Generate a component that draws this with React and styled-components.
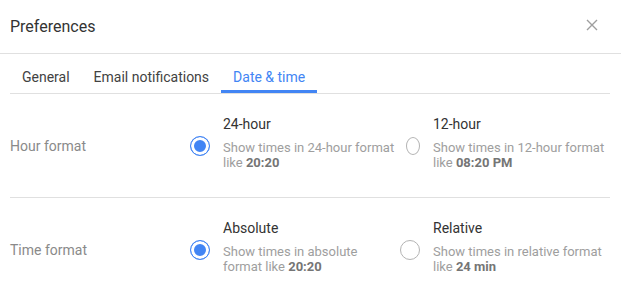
import React, { useState } from "react";
import styled, { createGlobalStyle } from "styled-components";

const GlobalStyle = createGlobalStyle`
  body {
    margin: 0;
    background: #fff;
    font-family: Roboto, "Noto Sans", sans-serif;
  }
`;

const Dialog = styled.div`
  width: 621px;
  background: #fff;
`;

const Header = styled.div`
  height: 53px;
  display: flex;
  align-items: center;
  justify-content: space-between;
  padding: 0 23px 0 10px;
  border-bottom: 1px solid #e0e0e0;
`;

const Title = styled.div`
  font-size: 16px;
  line-height: 20px;
  color: #333;
`;

const CloseButton = styled.button`
  width: 12px;
  height: 12px;
  padding: 0;
  border: none;
  background: none;
  display: flex;
  align-items: center;
  justify-content: center;
  cursor: pointer;
  margin-top: -4px;
`;

const Body = styled.div`
  padding: 0 11px 0 10px;
`;

const Tabs = styled.div`
  display: flex;
  border-bottom: 1px solid #e0e0e0;
`;

const Tab = styled.div`
  padding: 13px 12px 3px;
  font-size: 14px;
  line-height: 20px;
  color: ${(p) => (p.$active ? "#4285f4" : "#424242")};
  border-bottom: 3px solid ${(p) => (p.$active ? "#4285f4" : "transparent")};
  cursor: pointer;
`;

const Row = styled.div`
  display: flex;
  align-items: center;
  height: 103px;
  border-bottom: ${(p) => (p.$last ? "none" : "1px solid #e0e0e0")};
`;

const RowLabel = styled.div`
  width: 180px;
  flex: none;
  font-size: 14px;
  color: #8a8a8a;
`;

const Options = styled.div`
  display: flex;
`;

const Option = styled.label`
  width: 210px;
  display: flex;
  align-items: center;
  cursor: pointer;
`;

const RadioSlot = styled.div`
  width: 20px;
  flex: none;
  display: flex;
  justify-content: flex-end;
  margin-right: 13px;
`;

const Radio = styled.span`
  box-sizing: border-box;
  width: ${(p) => (p.$narrow ? "14px" : "20px")};
  height: ${(p) => (p.$narrow ? "18px" : "20px")};
  border-radius: 50%;
  border: 1px solid ${(p) => (p.$checked ? "#4285f4" : "#b3b3b3")};
  background: ${(p) => (p.$checked ? "#4285f4" : "#fff")};
  box-shadow: ${(p) => (p.$checked ? "inset 0 0 0 3px #fff" : "none")};
`;

const OptionText = styled.div`
  width: 177px;
  padding-bottom: 8px;
`;

const OptionTitle = styled.div`
  font-size: 14px;
  line-height: 20px;
  color: #333;
  margin-bottom: 6px;
`;

const OptionDesc = styled.div`
  font-size: 13px;
  line-height: 15px;
  color: #9e9e9e;
  white-space: nowrap;

  b {
    color: #757575;
    font-weight: 700;
  }
`;

const CloseIcon = () => (
  <svg width="12" height="12" viewBox="0 0 12 12">
    <path d="M1 1L11 11M11 1L1 11" stroke="#9e9e9e" strokeWidth="1.4" />
  </svg>
);

const settings = [
  {
    key: "hour",
    label: "Hour format",
    options: [
      { value: "24", title: "24-hour", lines: ["Show times in 24-hour format"], tail: "like ", bold: "20:20" },
      { value: "12", title: "12-hour", lines: ["Show times in 12-hour format"], tail: "like ", bold: "08:20 PM", narrow: true },
    ],
  },
  {
    key: "time",
    label: "Time format",
    options: [
      { value: "abs", title: "Absolute", lines: ["Show times in absolute"], tail: "format like ", bold: "20:20" },
      { value: "rel", title: "Relative", lines: ["Show times in relative format"], tail: "like ", bold: "24 min" },
    ],
  },
];

export default function App() {
  const [tab, setTab] = useState("date");
  const [values, setValues] = useState({ hour: "24", time: "abs" });

  return (
    <>
      <GlobalStyle />
      <Dialog>
        <Header>
          <Title>Preferences</Title>
          <CloseButton aria-label="Close">
            <CloseIcon />
          </CloseButton>
        </Header>
        <Body>
          <Tabs>
            <Tab $active={tab === "general"} onClick={() => setTab("general")}>General</Tab>
            <Tab $active={tab === "email"} onClick={() => setTab("email")}>Email notifications</Tab>
            <Tab $active={tab === "date"} onClick={() => setTab("date")}>Date &amp; time</Tab>
          </Tabs>
          {settings.map((s, i) => (
            <Row key={s.key} $last={i === settings.length - 1}>
              <RowLabel>{s.label}</RowLabel>
              <Options>
                {s.options.map((o) => (
                  <Option key={o.value} onClick={() => setValues({ ...values, [s.key]: o.value })}>
                    <RadioSlot>
                      <Radio $checked={values[s.key] === o.value} $narrow={o.narrow} />
                    </RadioSlot>
                    <OptionText>
                      <OptionTitle>{o.title}</OptionTitle>
                      {o.lines.map((l) => (
                        <OptionDesc key={l}>{l}</OptionDesc>
                      ))}
                      <OptionDesc>
                        {o.tail}
                        <b>{o.bold}</b>
                      </OptionDesc>
                    </OptionText>
                  </Option>
                ))}
              </Options>
            </Row>
          ))}
        </Body>
      </Dialog>
    </>
  );
}
